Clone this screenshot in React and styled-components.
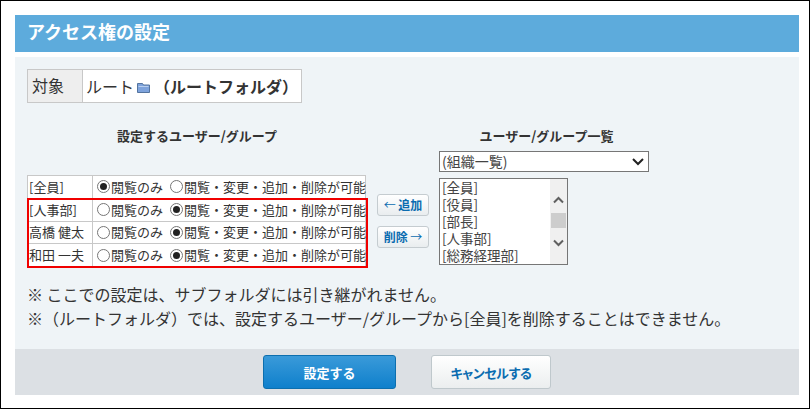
import React from "react";
import styled, { createGlobalStyle } from "styled-components";

const GlobalStyle = createGlobalStyle`
    html, body {
        margin: 0;
        padding: 0;
        background-color: white;
    }
    body {
        font-family: "Noto Sans CJK JP", "Liberation Sans", sans-serif;
        color: #333;
    }
`

const Frame = styled.div`
    box-sizing: border-box;
    width: 810px;
    height: 409px;
    padding: 14px 10px 12px 14px;
    border: 1px solid black;
    overflow: hidden;
`

const Header = styled.h1`
    margin: 0;
    height: 37px;
    padding-left: 12px;
    background-color: #5dabdc;
    color: white;
    font-size: 18px;
    font-weight: 700;
    line-height: 33px;
`

const Panel = styled.div`
    box-sizing: border-box;
    height: 292px;
    margin-top: 5px;
    padding: 12px 12px 0;
    background-color: #eff4f7;
`

const TargetTable = styled.div`
    display: flex;
    width: 275px;
    height: 34px;
    box-sizing: border-box;
    border: 1px solid #c8c8c8;
    font-size: 16px;
    line-height: 30px;
`

const TargetLabel = styled.div`
    width: 50px;
    padding-left: 4px;
    background-color: #eeeeee;
    border-right: 1px solid #c8c8c8;
`

const TargetValue = styled.div`
    flex: 1;
    display: flex;
    align-items: center;
    padding-left: 3px;
    background-color: white;
`

const Folder = styled.svg`
    margin-left: 3px;
    margin-top: 2px;
`

const BoldName = styled.span`
    font-weight: 700;
    margin-left: 4px;
`

const Transfer = styled.div`
    display: flex;
    margin-top: 23px;
`

const LeftColumn = styled.div`
    width: 340px;
`

const ColumnTitle = styled.div`
    height: 20px;
    font-size: 13px;
    font-weight: 700;
    line-height: 20px;
    text-align: center;
`

const TableWrap = styled.div`
    position: relative;
    margin-top: 29px;
`

const MemberTable = styled.table`
    box-sizing: border-box;
    width: 339px;
    table-layout: fixed;
    border-collapse: collapse;
    border: 1px solid #9a9a9a;
    background-color: white;
    font-size: 13px;
    line-height: 20px;

    td {
        box-sizing: border-box;
        height: 22.75px;
        padding: 0;
        border: 1px solid #c8c8c8;
        white-space: nowrap;
    }
`

const NameCell = styled.td`
    width: 65px;
    padding-left: 1px !important;
`

const RadioRow = styled.div`
    display: flex;
    align-items: center;
    height: 20px;
    padding-left: 4px;
`

const RadioLabel = styled.span`
    display: flex;
    align-items: center;
    margin-left: ${(props) => props.$first ? "0" : "7px"};
`

const Radio = styled.span`
    box-sizing: border-box;
    display: inline-flex;
    align-items: center;
    justify-content: center;
    width: 13px;
    height: 13px;
    margin-right: 1px;
    border: 1px solid #767676;
    border-radius: 50%;
    background-color: white;

    &::after {
        content: "";
        display: ${(props) => props.$checked ? "block" : "none"};
        width: 7px;
        height: 7px;
        border-radius: 50%;
        background-color: #222;
    }
`

const RedBox = styled.div`
    position: absolute;
    left: 0;
    top: 23px;
    width: 341px;
    height: 70px;
    box-sizing: border-box;
    border: 2px solid #f00000;
    pointer-events: none;
`

const MoveButtons = styled.div`
    display: flex;
    flex-direction: column;
    gap: 10px;
    width: 52px;
    margin-left: 10px;
    margin-top: 68px;
`

const MoveButton = styled.button`
    box-sizing: border-box;
    width: 52px;
    height: 22px;
    padding: 0;
    border: 1px solid #c5ccd0;
    border-radius: 3px;
    background: linear-gradient(#ffffff, #e9edef);
    color: #0a6cb0;
    font-family: inherit;
    font-size: 12px;
    font-weight: 700;
    line-height: 20px;
`

const Arrow = styled.span`
    font-weight: 400;
`

const RightColumn = styled.div`
    width: 215px;
    margin-left: 10px;
`

const chevron = encodeURIComponent(
    '<svg xmlns="http://www.w3.org/2000/svg" width="12" height="8"><path d="M1 1l5 5 5-5" fill="none" stroke="#222" stroke-width="2"/></svg>'
);

const GroupSelect = styled.select`
    display: block;
    box-sizing: border-box;
    width: 210px;
    height: 21px;
    margin-top: 5px;
    padding: 0 0 0 2px;
    border: 1px solid #767676;
    border-radius: 0;
    appearance: none;
    background: white url("data:image/svg+xml,${chevron}") no-repeat right 4px center;
    color: #444;
    font-family: inherit;
    font-size: 14px;
    line-height: 19px;
`

const ListBox = styled.div`
    display: flex;
    box-sizing: border-box;
    width: 129px;
    height: 87px;
    margin-top: 6px;
    border: 1px solid #767676;
    background-color: white;
    overflow: hidden;
`

const ListItems = styled.ul`
    flex: 1;
    margin: 0;
    padding: 0 0 0 2px;
    list-style: none;
    color: #444;
    font-size: 13.5px;
    line-height: 17px;
    white-space: nowrap;
`

const ScrollBar = styled.div`
    position: relative;
    width: 17px;
    background-color: #f0f0f0;
`

const ScrollArrow = styled.svg`
    position: absolute;
    left: 3px;
    top: ${(props) => props.$top}px;
    width: 11px;
    height: 8px;
`

const ScrollThumb = styled.div`
    position: absolute;
    left: 1px;
    top: 34px;
    width: 15px;
    height: 15px;
    background-color: #cdcdcd;
`

const Notes = styled.div`
    margin-top: 15px;
    font-size: 16px;
    line-height: 24px;
    white-space: nowrap;
`

const Footer = styled.div`
    display: flex;
    justify-content: center;
    align-items: center;
    gap: 35px;
    height: 46px;
    background-color: #dce0e4;
`

const SubmitButton = styled.button`
    box-sizing: border-box;
    width: 133px;
    height: 34px;
    border: 1px solid #0d6fae;
    border-radius: 3px;
    background: linear-gradient(#3a9ad9, #0f80cc);
    color: white;
    font-family: inherit;
    font-size: 13px;
    font-weight: 700;
`

const CancelButton = styled.button`
    box-sizing: border-box;
    width: 120px;
    height: 34px;
    border: 1px solid #bfc8cc;
    border-radius: 3px;
    background: linear-gradient(#ffffff, #ebeeef);
    color: #0a6cb0;
    font-family: inherit;
    font-size: 13px;
    font-weight: 700;
    font-feature-settings: "palt";
    letter-spacing: -0.4px;
`

const FolderIcon = () => (
    <Folder width="13" height="11" viewBox="0 0 13 11">
        <path d="M0.5 1.5h5l1 1.5h6v7.5h-12z" fill="#7ea3dc" stroke="#54749f"/>
        <path d="M1.5 4h10v1h-10z" fill="#b9cfee"/>
    </Folder>
);

const ChevronUp = () => (
    <ScrollArrow $top={17} viewBox="0 0 11 8">
        <path d="M1 6.5l4.5-4.5 4.5 4.5" fill="none" stroke="#606060" strokeWidth="2"/>
    </ScrollArrow>
);

const ChevronDown = () => (
    <ScrollArrow $top={60} viewBox="0 0 11 8">
        <path d="M1 1.5l4.5 4.5 4.5-4.5" fill="none" stroke="#606060" strokeWidth="2"/>
    </ScrollArrow>
);

const members = [
    {name: "[全員]", full: false},
    {name: "[人事部]", full: true},
    {name: "高橋 健太", full: true},
    {name: "和田 一夫", full: true},
];

const groups = ["[全員]", "[役員]", "[部長]", "[人事部]", "[総務経理部]"];

const App = () => {
    return (
        <Frame>
            <GlobalStyle/>
            <Header>アクセス権の設定</Header>
            <Panel>
                <TargetTable>
                    <TargetLabel>対象</TargetLabel>
                    <TargetValue>
                        ルート<FolderIcon/><BoldName>（ルートフォルダ）</BoldName>
                    </TargetValue>
                </TargetTable>
                <Transfer>
                    <LeftColumn>
                        <ColumnTitle>設定するユーザー/グループ</ColumnTitle>
                        <TableWrap>
                            <MemberTable>
                                <tbody>
                                    {members.map((member) => (
                                        <tr key={member.name}>
                                            <NameCell>{member.name}</NameCell>
                                            <td>
                                                <RadioRow>
                                                    <RadioLabel $first><Radio $checked={!member.full}/>閲覧のみ</RadioLabel>
                                                    <RadioLabel><Radio $checked={member.full}/>閲覧・変更・追加・削除が可能</RadioLabel>
                                                </RadioRow>
                                            </td>
                                        </tr>
                                    ))}
                                </tbody>
                            </MemberTable>
                            <RedBox/>
                        </TableWrap>
                    </LeftColumn>
                    <MoveButtons>
                        <MoveButton><Arrow>←</Arrow> 追加</MoveButton>
                        <MoveButton>削除 <Arrow>→</Arrow></MoveButton>
                    </MoveButtons>
                    <RightColumn>
                        <ColumnTitle>ユーザー/グループ一覧</ColumnTitle>
                        <GroupSelect defaultValue="all">
                            <option value="all">(組織一覧)</option>
                        </GroupSelect>
                        <ListBox>
                            <ListItems>
                                {groups.map((group) => <li key={group}>{group}</li>)}
                            </ListItems>
                            <ScrollBar>
                                <ChevronUp/>
                                <ScrollThumb/>
                                <ChevronDown/>
                            </ScrollBar>
                        </ListBox>
                    </RightColumn>
                </Transfer>
                <Notes>
                    <div>※ ここでの設定は、サブフォルダには引き継がれません。</div>
                    <div>※（ルートフォルダ）では、設定するユーザー/グループから[全員]を削除することはできません。</div>
                </Notes>
            </Panel>
            <Footer>
                <SubmitButton>設定する</SubmitButton>
                <CancelButton>キャンセルする</CancelButton>
            </Footer>
        </Frame>
    );
};

export default App;
